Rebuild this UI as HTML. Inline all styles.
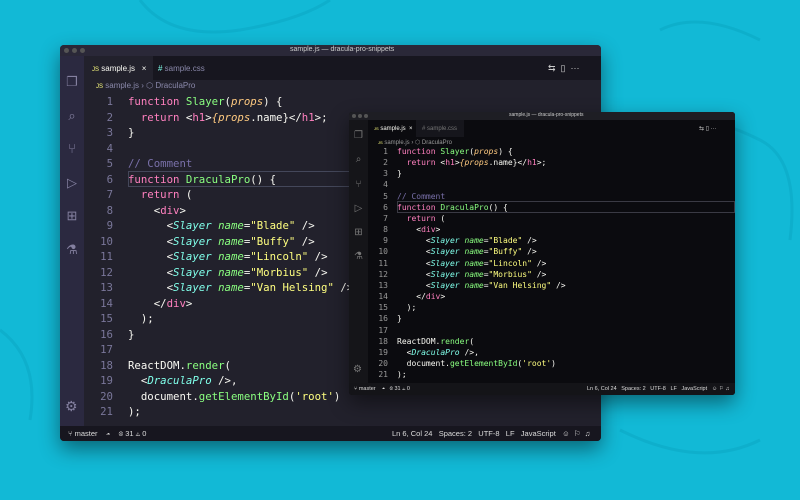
<!DOCTYPE html>
<html><head><meta charset="utf-8"><style>
*{margin:0;padding:0;box-sizing:border-box}
body{width:800px;height:500px;overflow:hidden;background:#12b9d6;position:relative;font-family:"Liberation Sans",sans-serif}
.win{position:absolute;overflow:hidden;box-shadow:0 8px 20px rgba(0,0,0,.45)}
.code{position:absolute;font-family:"DejaVu Sans Mono","Liberation Mono",monospace;white-space:pre}
.ln{position:absolute;text-align:right;font-family:"DejaVu Sans Mono","Liberation Mono",monospace;white-space:pre}
.k{color:#ff80bf}.f{color:#8aff80}.p{color:#ffca80;font-style:italic}.c{color:#7970a9}.s{color:#ffff80}.t{color:#80ffea;font-style:italic}.a{color:#8aff80;font-style:italic}
.dot{position:absolute;border-radius:50%;background:#555}
</style></head><body>
<svg style="position:absolute;left:0;top:0" width="800" height="500"><g fill="none" stroke="#0aa6c2" stroke-width="3" opacity=".5"><path d="M140 0 Q170 40 240 30 Q300 20 330 0"/><path d="M660 30 Q700 10 760 40"/><path d="M680 130 Q700 110 760 140 Q800 160 790 240"/><path d="M0 330 Q40 360 30 420"/><path d="M620 430 Q700 470 760 440"/></g></svg>

<!-- Big window -->
<div class="win" style="left:60px;top:45px;width:541px;height:396px;background:#22212c;border-radius:4px">
 <div style="position:absolute;left:0;top:0;width:541px;height:11px;background:#2a2838"></div>
 <div class="dot" style="left:4px;top:3px;width:5px;height:5px"></div><div class="dot" style="left:12px;top:3px;width:5px;height:5px"></div><div class="dot" style="left:20px;top:3px;width:5px;height:5px"></div>
 <div style="position:absolute;left:230px;top:1px;font-size:7px;color:#ccc">sample.js — dracula-pro-snippets</div>
 <div style="position:absolute;left:0;top:11px;width:24px;height:370px;background:#2b2940"></div>
 <div style="position:absolute;left:24px;top:11px;width:517px;height:24px;background:#17161f"></div>
 <div style="position:absolute;left:24px;top:11px;width:69px;height:24px;background:#22212c;font-size:8px;color:#f8f8f2;padding:8px 0 0 8px"><span style="color:#ffff80;font-size:6px">JS</span> sample.js &nbsp;&nbsp;×</div>
 <div style="position:absolute;left:98px;top:19px;font-size:8px;color:#8a88aa"><span style="color:#80ffea">#</span> sample.css</div>
 <div style="position:absolute;left:488px;top:18px;font-size:9px;color:#ccc">⇆ &nbsp;▯ &nbsp;···</div>
 <div style="position:absolute;left:36px;top:36px;font-size:8px;color:#8a88aa"><span style="color:#ffff80;font-size:6px">JS</span> sample.js › ⬡ DraculaPro</div>
 <div style="position:absolute;left:5px;top:20px;color:#8480a0;font-size:13px;line-height:33.5px;width:14px;text-align:center">❐<br>⌕<br>⑂<br>▷<br>⊞<br>⚗</div>
 <div style="position:absolute;left:5px;top:353px;color:#8480a0;font-size:14px">⚙</div>
 <div style="position:absolute;left:68px;top:126px;width:473px;height:16px;border:1px solid #44475a"></div>
 <div class="ln" style="left:30px;top:49px;width:23px;font-size:10.7px;line-height:15.5px;color:#7a779a">1
2
3
4
5
6
7
8
9
10
11
12
13
14
15
16
17
18
19
20
21</div>
 <div class="code" style="left:68px;top:49px;font-size:10.7px;line-height:15.5px;color:#f8f8f2"><span class="k">function</span> <span class="f">Slayer</span>(<span class="p">props</span>) {
  <span class="k">return</span> &lt;<span class="k">h1</span>&gt;<span class="p">{props</span>.name}&lt;/<span class="k">h1</span>&gt;;
}

<span class="c">// Comment</span>
<span class="k">function</span> <span class="f">DraculaPro</span>() {
  <span class="k">return</span> (
    &lt;<span class="k">div</span>&gt;
      &lt;<span class="t">Slayer</span> <span class="a">name</span>=<span class="s">"Blade"</span> /&gt;
      &lt;<span class="t">Slayer</span> <span class="a">name</span>=<span class="s">"Buffy"</span> /&gt;
      &lt;<span class="t">Slayer</span> <span class="a">name</span>=<span class="s">"Lincoln"</span> /&gt;
      &lt;<span class="t">Slayer</span> <span class="a">name</span>=<span class="s">"Morbius"</span> /&gt;
      &lt;<span class="t">Slayer</span> <span class="a">name</span>=<span class="s">"Van Helsing"</span> /&gt;
    &lt;/<span class="k">div</span>&gt;
  );
}

ReactDOM.<span class="f">render</span>(
  &lt;<span class="t">DraculaPro</span> /&gt;,
  document.<span class="f">getElementById</span>(<span class="s">'root'</span>)
);</div>
 <div style="position:absolute;left:0;top:381px;width:541px;height:15px;background:#17161f;font-size:7.5px;color:#ddd;white-space:nowrap">
  <span style="position:absolute;left:8px;top:3px">⑂ master &nbsp;&nbsp; ☁ &nbsp;&nbsp; ⊗ 31 ⚠ 0</span>
  <span style="position:absolute;left:332px;top:3px">Ln 6, Col 24 &nbsp;&nbsp;Spaces: 2 &nbsp;&nbsp;UTF-8 &nbsp;&nbsp;LF &nbsp;&nbsp;JavaScript &nbsp;&nbsp;☺ &nbsp;⚐ &nbsp;♫</span>
 </div>
</div>

<!-- Small window -->
<div class="win" style="left:349px;top:112px;width:386px;height:283px;background:#0b0b0f;border-radius:3px">
 <div style="position:absolute;left:0;top:0;width:386px;height:8px;background:#1e1e24"></div>
 <div class="dot" style="left:3px;top:2px;width:4px;height:4px"></div><div class="dot" style="left:9px;top:2px;width:4px;height:4px"></div><div class="dot" style="left:15px;top:2px;width:4px;height:4px"></div>
 <div style="position:absolute;left:160px;top:0;font-size:5px;color:#ccc">sample.js — dracula-pro-snippets</div>
 <div style="position:absolute;left:0;top:8px;width:19px;height:263px;background:#151519"></div>
 <div style="position:absolute;left:19px;top:8px;width:48px;height:17px;background:#0b0b0f;font-size:6px;color:#f8f8f2;padding:6px 0 0 6px"><span style="color:#ffff80;font-size:4px">JS</span> sample.js &nbsp;×</div>
 <div style="position:absolute;left:67px;top:8px;width:48px;height:17px;background:#16161c;font-size:6px;color:#777;padding:6px 0 0 6px"># sample.css</div>
 <div style="position:absolute;left:350px;top:13px;font-size:6px;color:#ccc">⇆ ▯ ···</div>
 <div style="position:absolute;left:29px;top:27px;font-size:6px;color:#999"><span style="color:#ffff80;font-size:4px">JS</span> sample.js › ⬡ DraculaPro</div>
 <div style="position:absolute;left:4px;top:12px;color:#777;font-size:10px;line-height:24.3px;width:11px;text-align:center">❐<br>⌕<br>⑂<br>▷<br>⊞<br>⚗</div>
 <div style="position:absolute;left:4px;top:252px;color:#777;font-size:10px">⚙</div>
 <div style="position:absolute;left:48px;top:89px;width:338px;height:12px;border:1px solid #3a3a44"></div>
 <div class="ln" style="left:22px;top:34px;width:17px;font-size:8px;line-height:11.15px;color:#999">1
2
3
4
5
6
7
8
9
10
11
12
13
14
15
16
17
18
19
20
21</div>
 <div class="code" style="left:48px;top:34px;font-size:8px;line-height:11.15px;color:#f8f8f2"><span class="k">function</span> <span class="f">Slayer</span>(<span class="p">props</span>) {
  <span class="k">return</span> &lt;<span class="k">h1</span>&gt;<span class="p">{props</span>.name}&lt;/<span class="k">h1</span>&gt;;
}

<span class="c">// Comment</span>
<span class="k">function</span> <span class="f">DraculaPro</span>() {
  <span class="k">return</span> (
    &lt;<span class="k">div</span>&gt;
      &lt;<span class="t">Slayer</span> <span class="a">name</span>=<span class="s">"Blade"</span> /&gt;
      &lt;<span class="t">Slayer</span> <span class="a">name</span>=<span class="s">"Buffy"</span> /&gt;
      &lt;<span class="t">Slayer</span> <span class="a">name</span>=<span class="s">"Lincoln"</span> /&gt;
      &lt;<span class="t">Slayer</span> <span class="a">name</span>=<span class="s">"Morbius"</span> /&gt;
      &lt;<span class="t">Slayer</span> <span class="a">name</span>=<span class="s">"Van Helsing"</span> /&gt;
    &lt;/<span class="k">div</span>&gt;
  );
}

ReactDOM.<span class="f">render</span>(
  &lt;<span class="t">DraculaPro</span> /&gt;,
  document.<span class="f">getElementById</span>(<span class="s">'root'</span>)
);</div>
 <div style="position:absolute;left:0;top:271px;width:386px;height:12px;background:#141418;font-size:5.5px;color:#ddd;white-space:nowrap">
  <span style="position:absolute;left:5px;top:3px">⑂ master &nbsp;&nbsp; ☁ &nbsp; ⊗ 31 ⚠ 0</span>
  <span style="position:absolute;left:238px;top:3px">Ln 6, Col 24 &nbsp; Spaces: 2 &nbsp; UTF-8 &nbsp; LF &nbsp; JavaScript &nbsp; ☺ ⚐ ♫</span>
 </div>
</div>
</body></html>
